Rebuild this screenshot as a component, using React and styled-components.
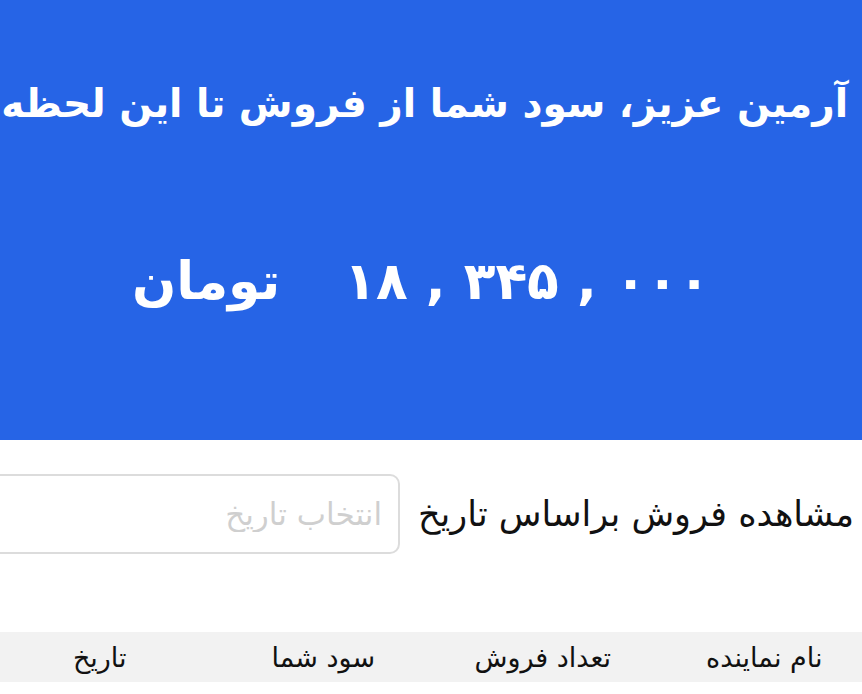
import React from "react";
import styled, { createGlobalStyle } from "styled-components";

const GlobalStyle = createGlobalStyle`
  body {
    margin: 0;
    font-family: "DejaVu Sans", "Noto Sans", sans-serif;
    background: #fff;
    direction: rtl;
    overflow: hidden;
  }
`;

const Page = styled.div`
  width: 862px;
  height: 694px;
  overflow: hidden;
`;

const Hero = styled.header`
  background: #2664e6;
  height: 440px;
  color: #fff;
  display: flex;
  flex-direction: column;
  align-items: stretch;
`;

const Title = styled.h1`
  margin: 0;
  padding: 81px 14px 0 0;
  font-size: 39px;
  font-weight: bold;
  white-space: nowrap;
  text-align: right;
`;

const Amount = styled.div`
  margin-top: 125px;
  display: flex;
  justify-content: center;
  gap: 64px;
  font-size: 52px;
  font-weight: bold;
  padding-right: 20px;
`;

const Number = styled.span`
  direction: ltr;
  unicode-bidi: isolate;
`;

const FilterRow = styled.div`
  display: flex;
  align-items: center;
  gap: 18px;
  margin-top: 34px;
  padding-right: 8px;
`;

const Label = styled.label`
  font-size: 35px;
  color: #111;
  white-space: nowrap;
  flex: 0 0 auto;
`;

const DateInput = styled.input`
  flex: 0 0 480px;
  height: 80px;
  box-sizing: border-box;
  border: 2px solid #dcdcdc;
  border-radius: 10px;
  padding: 0 16px;
  font-family: inherit;
  font-size: 31px;
  direction: rtl;
  outline: none;
  &::placeholder {
    color: #cfcfcf;
  }
`;

const Table = styled.div`
  margin-top: 78px;
`;

const HeadRow = styled.div`
  display: grid;
  grid-template-columns: repeat(4, 1fr);
  background: #f2f2f2;
  height: 50px;
  align-items: center;
`;

const HeadCell = styled.div`
  text-align: center;
  font-size: 27px;
  color: #111;
  padding-left: ${(p) => p.$left || 0}px;
  padding-right: ${(p) => p.$right || 0}px;
`;

export default function App() {
  return (
    <Page>
      <GlobalStyle />
      <Hero>
        <Title>آرمین عزیز، سود شما از فروش تا این لحظه</Title>
        <Amount>
          <Number>۱۸ , ۳۴۵ , ۰۰۰</Number>
          <span>تومان</span>
        </Amount>
      </Hero>
      <FilterRow>
        <Label>مشاهده فروش براساس تاریخ</Label>
        <DateInput placeholder="انتخاب تاریخ" />
      </FilterRow>
      <Table>
        <HeadRow>
          <HeadCell $left={20}>نام نماینده</HeadCell>
          <HeadCell $left={8}>تعداد فروش</HeadCell>
          <HeadCell>سود شما</HeadCell>
          <HeadCell $right={16}>تاریخ</HeadCell>
        </HeadRow>
      </Table>
    </Page>
  );
}
